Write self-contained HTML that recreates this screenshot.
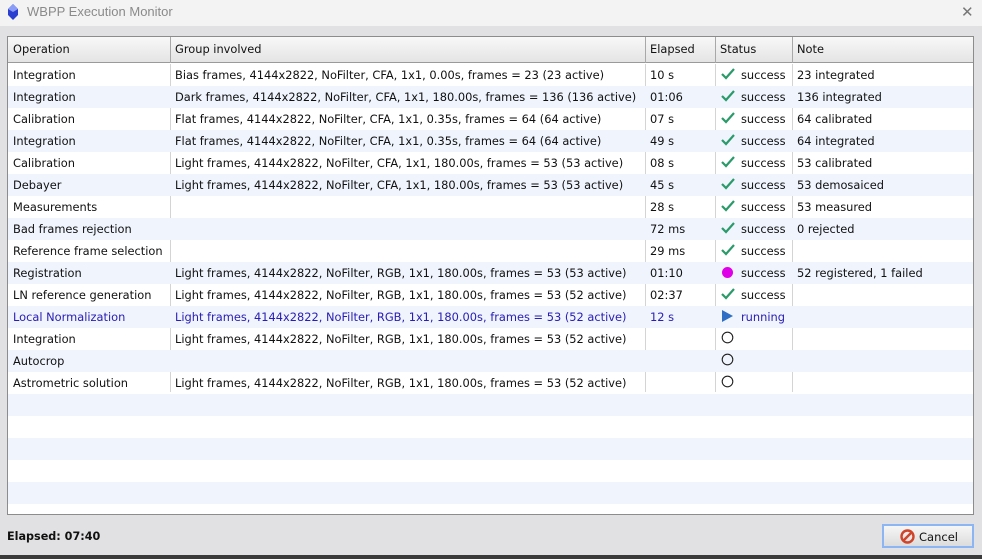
<!DOCTYPE html>
<html><head><meta charset="utf-8"><style>
*{margin:0;padding:0;box-sizing:border-box}
body{width:982px;height:559px;background:#e1e1e3;font-family:"DejaVu Sans","Liberation Sans",sans-serif;font-size:11.4px;color:#111;position:relative;overflow:hidden}
.title{position:absolute;left:0;top:0;width:982px;height:26px;background:#f3f3f3;font-family:"Liberation Sans",sans-serif;font-size:13px;color:#8a8a8a}
.title span{position:absolute;left:27px;top:4px}
.title .x{position:absolute;left:961px;top:3px;font-size:15px;color:#777}
.tbl{position:absolute;left:7px;top:36px;width:967px;height:479px;border:1px solid #8c8c8c;background:#fff;overflow:hidden}
.hdr{position:absolute;left:0;top:0;width:100%;height:26px;background:linear-gradient(#f8f8f8,#e4e4e4);border-bottom:1px solid #9a9a9a}
.row{position:absolute;left:0;width:100%;height:22px}
.row.a{background:#eff4fd}
.c{position:absolute;top:0;height:100%;line-height:22px;white-space:nowrap;padding-left:5px}
.hdr .c{line-height:25px}
.vl{position:absolute;top:0;width:1px;height:381px;background:#d4d4d4}
.hvl{position:absolute;top:0;width:1px;height:26px;background:#a8a8a8}
.blue{color:#2a1cb4}
.ic{position:absolute;top:0;left:6px}
.foot{position:absolute;left:7px;top:530px;font-weight:bold;font-size:11.2px}
.btn{position:absolute;left:882px;top:524px;width:92px;height:24px;border:2px solid #8db5f3;background:linear-gradient(#f6f6f6,#dcdcdc);font-size:11.5px}
.btn span{position:absolute;left:35px;top:4px}
.bot{position:absolute;left:0;top:555px;width:982px;height:4px;background:#3a3a3a}
</style></head><body>
<div class="title"><svg style="position:absolute;left:7px;top:4px" width="12" height="16" viewBox="0 0 12 16"><path d="M6 0 L11 5 L11 11 L6 16 L1 11 L1 5 Z" fill="#2a3fd0"/><path d="M6 0 L11 5 L6 8 L1 5Z" fill="#8a9cf5"/></svg><span>WBPP Execution Monitor</span><div class="x">✕</div></div>
<div class="tbl">
<div class="hdr">
<div class="c" style="left:0">Operation</div><div class="hvl" style="left:162px"></div>
<div class="c" style="left:162px">Group involved</div><div class="hvl" style="left:637px"></div>
<div class="c" style="left:637px">Elapsed</div><div class="hvl" style="left:707px"></div>
<div class="c" style="left:707px">Status</div><div class="hvl" style="left:784px"></div>
<div class="c" style="left:784px">Note</div>
</div>
<div class="vl" style="left:162px;top:27px;height:328px"></div>
<div class="vl" style="left:637px;top:27px;height:328px"></div>
<div class="vl" style="left:707px;top:27px;height:328px"></div>
<div class="vl" style="left:784px;top:27px;height:328px"></div>
<div class="row" style="top:27px"><div class="c" style="left:0">Integration</div><div class="c" style="left:162px">Bias frames, 4144x2822, NoFilter, CFA, 1x1, 0.00s, frames = 23 (23 active)</div><div class="c" style="left:637px">10 s</div><div class="c" style="left:707px;padding-left:26px">success<svg class="ic" style="top:3px" width="14" height="13"><path d="M1 7 L5 11 L13 2" stroke="#2a9a6a" stroke-width="2.2" fill="none"/></svg></div><div class="c" style="left:784px">23 integrated</div></div>
<div class="row a" style="top:49px"><div class="c" style="left:0">Integration</div><div class="c" style="left:162px">Dark frames, 4144x2822, NoFilter, CFA, 1x1, 180.00s, frames = 136 (136 active)</div><div class="c" style="left:637px">01:06</div><div class="c" style="left:707px;padding-left:26px">success<svg class="ic" style="top:3px" width="14" height="13"><path d="M1 7 L5 11 L13 2" stroke="#2a9a6a" stroke-width="2.2" fill="none"/></svg></div><div class="c" style="left:784px">136 integrated</div></div>
<div class="row" style="top:71px"><div class="c" style="left:0">Calibration</div><div class="c" style="left:162px">Flat frames, 4144x2822, NoFilter, CFA, 1x1, 0.35s, frames = 64 (64 active)</div><div class="c" style="left:637px">07 s</div><div class="c" style="left:707px;padding-left:26px">success<svg class="ic" style="top:3px" width="14" height="13"><path d="M1 7 L5 11 L13 2" stroke="#2a9a6a" stroke-width="2.2" fill="none"/></svg></div><div class="c" style="left:784px">64 calibrated</div></div>
<div class="row a" style="top:93px"><div class="c" style="left:0">Integration</div><div class="c" style="left:162px">Flat frames, 4144x2822, NoFilter, CFA, 1x1, 0.35s, frames = 64 (64 active)</div><div class="c" style="left:637px">49 s</div><div class="c" style="left:707px;padding-left:26px">success<svg class="ic" style="top:3px" width="14" height="13"><path d="M1 7 L5 11 L13 2" stroke="#2a9a6a" stroke-width="2.2" fill="none"/></svg></div><div class="c" style="left:784px">64 integrated</div></div>
<div class="row" style="top:115px"><div class="c" style="left:0">Calibration</div><div class="c" style="left:162px">Light frames, 4144x2822, NoFilter, CFA, 1x1, 180.00s, frames = 53 (53 active)</div><div class="c" style="left:637px">08 s</div><div class="c" style="left:707px;padding-left:26px">success<svg class="ic" style="top:3px" width="14" height="13"><path d="M1 7 L5 11 L13 2" stroke="#2a9a6a" stroke-width="2.2" fill="none"/></svg></div><div class="c" style="left:784px">53 calibrated</div></div>
<div class="row a" style="top:137px"><div class="c" style="left:0">Debayer</div><div class="c" style="left:162px">Light frames, 4144x2822, NoFilter, CFA, 1x1, 180.00s, frames = 53 (53 active)</div><div class="c" style="left:637px">45 s</div><div class="c" style="left:707px;padding-left:26px">success<svg class="ic" style="top:3px" width="14" height="13"><path d="M1 7 L5 11 L13 2" stroke="#2a9a6a" stroke-width="2.2" fill="none"/></svg></div><div class="c" style="left:784px">53 demosaiced</div></div>
<div class="row" style="top:159px"><div class="c" style="left:0">Measurements</div><div class="c" style="left:637px">28 s</div><div class="c" style="left:707px;padding-left:26px">success<svg class="ic" style="top:3px" width="14" height="13"><path d="M1 7 L5 11 L13 2" stroke="#2a9a6a" stroke-width="2.2" fill="none"/></svg></div><div class="c" style="left:784px">53 measured</div></div>
<div class="row a" style="top:181px"><div class="c" style="left:0">Bad frames rejection</div><div class="c" style="left:637px">72 ms</div><div class="c" style="left:707px;padding-left:26px">success<svg class="ic" style="top:3px" width="14" height="13"><path d="M1 7 L5 11 L13 2" stroke="#2a9a6a" stroke-width="2.2" fill="none"/></svg></div><div class="c" style="left:784px">0 rejected</div></div>
<div class="row" style="top:203px"><div class="c" style="left:0">Reference frame selection</div><div class="c" style="left:637px">29 ms</div><div class="c" style="left:707px;padding-left:26px">success<svg class="ic" style="top:3px" width="14" height="13"><path d="M1 7 L5 11 L13 2" stroke="#2a9a6a" stroke-width="2.2" fill="none"/></svg></div></div>
<div class="row a" style="top:225px"><div class="c" style="left:0">Registration</div><div class="c" style="left:162px">Light frames, 4144x2822, NoFilter, RGB, 1x1, 180.00s, frames = 53 (53 active)</div><div class="c" style="left:637px">01:10</div><div class="c" style="left:707px;padding-left:26px">success<svg class="ic" style="top:4px" width="13" height="13"><circle cx="6.5" cy="6.5" r="5.5" fill="#e000e8"/></svg></div><div class="c" style="left:784px">52 registered, 1 failed</div></div>
<div class="row" style="top:247px"><div class="c" style="left:0">LN reference generation</div><div class="c" style="left:162px">Light frames, 4144x2822, NoFilter, RGB, 1x1, 180.00s, frames = 53 (52 active)</div><div class="c" style="left:637px">02:37</div><div class="c" style="left:707px;padding-left:26px">success<svg class="ic" style="top:3px" width="14" height="13"><path d="M1 7 L5 11 L13 2" stroke="#2a9a6a" stroke-width="2.2" fill="none"/></svg></div></div>
<div class="row a blue" style="top:269px"><div class="c" style="left:0">Local Normalization</div><div class="c" style="left:162px">Light frames, 4144x2822, NoFilter, RGB, 1x1, 180.00s, frames = 53 (52 active)</div><div class="c" style="left:637px">12 s</div><div class="c" style="left:707px;padding-left:26px">running<svg class="ic" style="top:4px" width="13" height="13"><path d="M1 0 L12 6 L1 12 Z" fill="#2e6ec4"/></svg></div></div>
<div class="row" style="top:291px"><div class="c" style="left:0">Integration</div><div class="c" style="left:162px">Light frames, 4144x2822, NoFilter, RGB, 1x1, 180.00s, frames = 53 (52 active)</div><div class="c" style="left:707px"><svg class="ic" style="top:3px" width="13" height="13"><circle cx="6.5" cy="6.5" r="5.3" fill="none" stroke="#222" stroke-width="1.1"/></svg></div></div>
<div class="row a" style="top:313px"><div class="c" style="left:0">Autocrop</div><div class="c" style="left:707px"><svg class="ic" style="top:3px" width="13" height="13"><circle cx="6.5" cy="6.5" r="5.3" fill="none" stroke="#222" stroke-width="1.1"/></svg></div></div>
<div class="row" style="top:335px"><div class="c" style="left:0">Astrometric solution</div><div class="c" style="left:162px">Light frames, 4144x2822, NoFilter, RGB, 1x1, 180.00s, frames = 53 (52 active)</div><div class="c" style="left:707px"><svg class="ic" style="top:3px" width="13" height="13"><circle cx="6.5" cy="6.5" r="5.3" fill="none" stroke="#222" stroke-width="1.1"/></svg></div></div>
<div class="row a" style="top:357px"></div>
<div class="row a" style="top:401px"></div>
<div class="row a" style="top:445px"></div>
</div>
<div class="foot">Elapsed: 07:40</div>
<div class="btn"><svg style="position:absolute;left:16px;top:3px" width="15" height="15" viewBox="0 0 15 15"><circle cx="7.5" cy="7.5" r="6" fill="none" stroke="#d0442a" stroke-width="2.4"/><path d="M3.5 11.5 L11.5 3.5" stroke="#d0442a" stroke-width="2.4"/></svg><span>Cancel</span></div>
<div class="bot"></div>
</body></html>
